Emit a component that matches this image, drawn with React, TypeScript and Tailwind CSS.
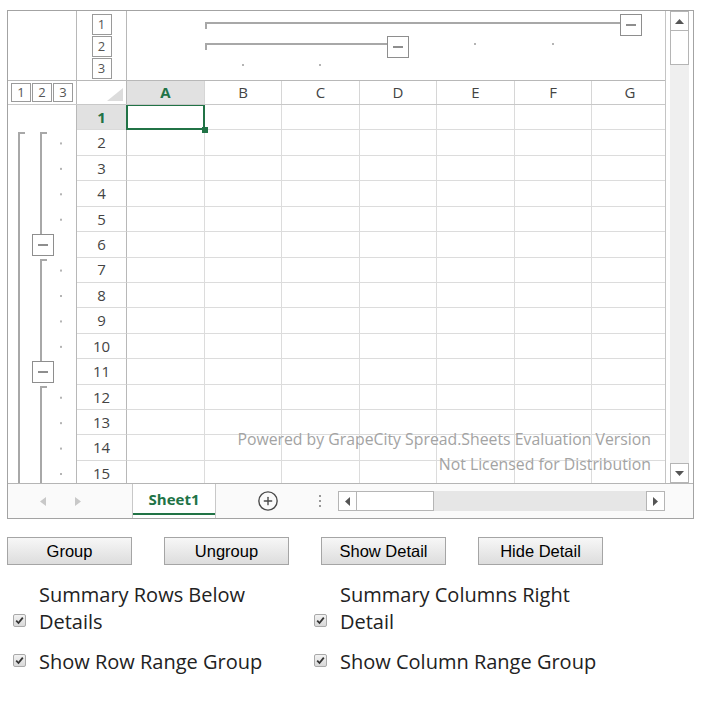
import React from "react";
import { CirclePlus } from "lucide-react";

const COLS = ["A", "B", "C", "D", "E", "F", "G"];
const COL_W = [78, 77, 78, 77, 78, 77, 77];
const ROWS = Array.from({ length: 15 }, (_, i) => i + 1);
const ROW_H = 25.43;

const ColumnOutline = () => (
  <svg width="538" height="69" className="block">
    <g stroke="#a8a8a8" strokeWidth="2" fill="none">
      <path d="M79 18 V12 H493" />
      <path d="M79 39 V33 H260" />
    </g>
    <g fill="#b4b4b4">
      <rect x="115" y="53" width="2" height="2" />
      <rect x="192" y="53" width="2" height="2" />
      <rect x="347" y="32" width="2" height="2" />
      <rect x="425" y="32" width="2" height="2" />
    </g>
    <rect x="493.5" y="3.5" width="21" height="21" fill="white" stroke="#8e8e8e" />
    <line x1="499" x2="509" y1="14" y2="14" stroke="#8e8e8e" strokeWidth="2" />
    <rect x="260.5" y="25.5" width="21" height="21" fill="white" stroke="#8e8e8e" />
    <line x1="266" x2="276" y1="36" y2="36" stroke="#8e8e8e" strokeWidth="2" />
  </svg>
);

const RowOutline = () => {
  const dots = [2, 3, 4, 5, 7, 8, 9, 10, 12, 13, 14, 15];
  return (
    <svg width="68" height="378" className="block">
      <g stroke="#a8a8a8" strokeWidth="2" fill="none">
        <path d="M17 28 H11 V378" />
        <path d="M39 28 H33 V130" />
        <path d="M39 155 H33 V256" />
        <path d="M39 282 H33 V378" />
      </g>
      <g fill="#b4b4b4">
        {dots.map((n) => (
          <rect key={n} x="52" y={12 + (n - 1) * ROW_H} width="2" height="2" />
        ))}
      </g>
      <rect x="24.5" y="129.5" width="21" height="21" fill="white" stroke="#8e8e8e" />
      <line x1="30" x2="40" y1="140" y2="140" stroke="#8e8e8e" strokeWidth="2" />
      <rect x="24.5" y="256.5" width="21" height="21" fill="white" stroke="#8e8e8e" />
      <line x1="30" x2="40" y1="267" y2="267" stroke="#8e8e8e" strokeWidth="2" />
    </svg>
  );
};

const LevelBox = ({ n, h }: { n: number; h: string }) => (
  <div
    className={`w-[20px] shrink-0 ${h} border border-[#9a9a9a] bg-white flex items-center justify-center text-[13px] leading-none text-[#555]`}
  >
    {n}
  </div>
);

const Check = () => (
  <span className="w-[13px] h-[13px] shrink-0 rounded-[2px] border border-[#a9a9a9] bg-gradient-to-b from-[#f2f2f2] to-[#d9d9d9] flex items-center justify-center">
    <svg width="9" height="9" viewBox="0 0 9 9">
      <path d="M1.2 4.6 L3.5 7 L7.8 1.6" stroke="#333" strokeWidth="1.8" fill="none" />
    </svg>
  </span>
);

const Btn = ({ label }: { label: string }) => (
  <button className="w-[125px] h-[28px] border border-[#a5a5a5] bg-gradient-to-b from-[#f7f7f7] to-[#dddddd] text-[16.5px] text-black font-['Liberation_Sans',sans-serif] flex items-center justify-center whitespace-nowrap">
    {label}
  </button>
);

export default function App() {
  return (
    <div className="w-[707px] h-[707px] bg-white font-['Open_Sans',sans-serif] text-[#333]">
      <div className="pt-[10px] pl-[7px]">
        {/* spreadsheet */}
        <div className="w-[687px] h-[509px] border border-[#a3a3a3] flex flex-col">
          <div className="flex h-[472px]">
            {/* left panel */}
            <div className="w-[657px] shrink-0 flex flex-col overflow-hidden">
              {/* column group area */}
              <div className="flex h-[70px] border-b border-[#b8b8b8] shrink-0">
                <div className="w-[69px] shrink-0 border-r border-[#b8b8b8]" />
                <div className="w-[50px] shrink-0 border-r border-[#b8b8b8] flex flex-col items-center pt-[3px] gap-[1px]">
                  <LevelBox n={1} h="h-[21px]" />
                  <LevelBox n={2} h="h-[21px]" />
                  <LevelBox n={3} h="h-[21px]" />
                </div>
                <div className="shrink-0">
                  <ColumnOutline />
                </div>
              </div>
              {/* header row */}
              <div className="flex h-[24px] border-b border-[#c8c8c8] shrink-0">
                <div className="w-[69px] shrink-0 border-r border-[#b8b8b8] flex items-center gap-[1px] pl-[3px]">
                  <LevelBox n={1} h="h-[19px]" />
                  <LevelBox n={2} h="h-[19px]" />
                  <LevelBox n={3} h="h-[19px]" />
                </div>
                <div className="w-[50px] shrink-0 border-r border-[#b8b8b8] flex items-end justify-end pr-[3px] pb-[3px]">
                  <svg width="16" height="13">
                    <polygon points="16,0 16,13 0,13" fill="#dcdcdc" />
                  </svg>
                </div>
                {COLS.map((c, i) => (
                  <div
                    key={c}
                    style={{ width: COL_W[i] }}
                    className={`shrink-0 border-r border-[#d6d6d6] flex items-center justify-center text-[15px] ${
                      i === 0 ? "bg-[#e1e1e1] text-[#217346] font-bold" : "text-[#444]"
                    }`}
                  >
                    {c}
                  </div>
                ))}
              </div>
              {/* body */}
              <div className="flex flex-1 relative overflow-hidden">
                <div className="w-[69px] border-r border-[#b8b8b8] shrink-0">
                  <RowOutline />
                </div>
                <div className="flex flex-col shrink-0">
                  {ROWS.map((r) => (
                    <div key={r} className="flex shrink-0" style={{ height: ROW_H }}>
                      <div
                        className={`w-[50px] shrink-0 border-r border-r-[#b8b8b8] border-b border-b-[#dadada] flex items-center justify-center text-[15px] ${
                          r === 1 ? "bg-[#e1e1e1] text-[#217346] font-bold" : "text-[#444]"
                        }`}
                      >
                        {r}
                      </div>
                      {COLS.map((c, i) => (
                        <div
                          key={c}
                          style={{ width: COL_W[i] }}
                          className="shrink-0 border-r border-b border-[#dcdcdc] relative"
                        >
                          {r === 1 && i === 0 && (
                            <>
                              <div className="absolute -left-[1px] -top-[1px] right-[-1px] bottom-[-1px] border-2 border-[#217346] z-10" />
                              <div className="absolute right-[-4px] bottom-[-4px] w-[6px] h-[6px] bg-[#217346] z-20" />
                            </>
                          )}
                        </div>
                      ))}
                    </div>
                  ))}
                </div>
                <div className="absolute right-[14px] top-[322px] text-right text-[15.8px] leading-[25px] text-[#a3a3a3] whitespace-nowrap">
                  <div>Powered by GrapeCity Spread.Sheets Evaluation Version</div>
                  <div>Not Licensed for Distribution</div>
                </div>
              </div>
            </div>
            {/* vertical scrollbar */}
            <div className="w-[28px] shrink-0 border-l border-[#c4c4c4] bg-white pl-[4px]">
              <div className="w-[19px] h-full bg-[#efefef] flex flex-col">
                <div className="h-[20px] border border-[#b5b5b5] bg-white flex items-center justify-center">
                  <svg width="9" height="5">
                    <polygon points="4.5,0 9,5 0,5" fill="#555" />
                  </svg>
                </div>
                <div className="h-[34px] border border-[#b5b5b5] border-t-0 bg-white" />
                <div className="flex-1" />
                <div className="h-[20px] border border-[#b5b5b5] bg-white flex items-center justify-center">
                  <svg width="9" height="5">
                    <polygon points="0,0 9,0 4.5,5" fill="#555" />
                  </svg>
                </div>
              </div>
            </div>
          </div>
          {/* tab bar */}
          <div className="h-[35px] border-t border-[#b5b5b5] bg-[#fafafa] flex items-stretch">
            <div className="w-[124px] shrink-0 flex items-center">
              <svg width="6" height="9" className="ml-[32px]">
                <polygon points="6,0 6,9 0,4.5" fill="#c8c8c8" />
              </svg>
              <svg width="6" height="9" className="ml-[29px]">
                <polygon points="0,0 0,9 6,4.5" fill="#c8c8c8" />
              </svg>
            </div>
            <div className="w-[84px] shrink-0 bg-white border-x border-[#c8c8c8] flex flex-col">
              <div className="flex-1 flex items-center justify-center pt-[2px] text-[15px] font-bold text-[#217346]">
                Sheet1
              </div>
              <div className="h-[2px] bg-[#217346] mb-[3px]" />
            </div>
            <div className="flex items-center ml-[41px]">
              <CirclePlus size={22} strokeWidth={1.5} color="#4a4a4a" />
            </div>
            <div className="flex flex-col justify-center gap-[3px] ml-[40px]">
              <span className="w-[2px] h-[2px] bg-[#999]" />
              <span className="w-[2px] h-[2px] bg-[#999]" />
              <span className="w-[2px] h-[2px] bg-[#999]" />
            </div>
            <div className="flex items-center ml-[17px]">
              <div className="w-[327px] h-[20px] bg-[#e6e6e6] flex">
                <div className="w-[19px] border border-[#b5b5b5] bg-white flex items-center justify-center">
                  <svg width="5" height="9">
                    <polygon points="5,0 5,9 0,4.5" fill="#555" />
                  </svg>
                </div>
                <div className="w-[77px] border border-l-0 border-[#b5b5b5] bg-white" />
                <div className="flex-1" />
                <div className="w-[19px] border border-[#b5b5b5] bg-white flex items-center justify-center">
                  <svg width="5" height="9">
                    <polygon points="0,0 0,9 5,4.5" fill="#555" />
                  </svg>
                </div>
              </div>
            </div>
          </div>
        </div>
        {/* buttons */}
        <div className="flex gap-[32px] mt-[18px]">
          <Btn label="Group" />
          <Btn label="Ungroup" />
          <Btn label="Show Detail" />
          <Btn label="Hide Detail" />
        </div>
      </div>
      {/* options */}
      <div className="pl-[13px] mt-[16px] grid grid-cols-[301px_301px] gap-y-[13px] text-[20px] leading-[27px] text-[#222]">
        <div className="flex items-end gap-[13px]">
          <span className="mb-[8px]">
            <Check />
          </span>
          <span>
            Summary Rows Below
            <br />
            Details
          </span>
        </div>
        <div className="flex items-end gap-[13px]">
          <span className="mb-[8px]">
            <Check />
          </span>
          <span>
            Summary Columns Right
            <br />
            Detail
          </span>
        </div>
        <div className="flex items-end gap-[13px]">
          <span className="mb-[8px]">
            <Check />
          </span>
          <span className="whitespace-nowrap">Show Row Range Group</span>
        </div>
        <div className="flex items-end gap-[13px]">
          <span className="mb-[8px]">
            <Check />
          </span>
          <span className="whitespace-nowrap">Show Column Range Group</span>
        </div>
      </div>
    </div>
  );
}
